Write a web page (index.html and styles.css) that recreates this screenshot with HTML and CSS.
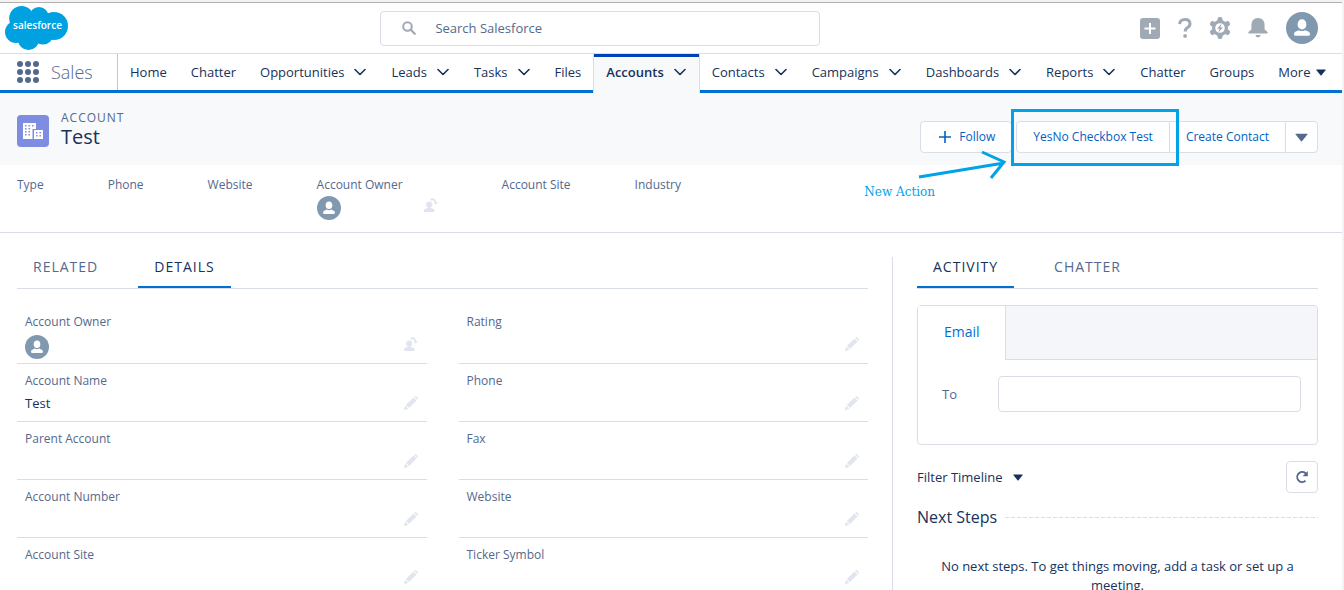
FILE: index.html
```html
<!DOCTYPE html>
<html lang="en">
<head>
    <meta charset="UTF-8">
    <meta name="viewport" content="width=device-width, initial-scale=1.0">
    <title>Test | Salesforce</title>
    <link rel="stylesheet" href="styles.css">
</head>
<body>
    <!-- shared icons -->
    <svg class="sprite" aria-hidden="true">
        <symbol id="chevron" viewBox="0 0 12 8"><path d="M1 1.5l5 5 5-5" fill="none" stroke="currentColor" stroke-width="1.6" stroke-linecap="round" stroke-linejoin="round"/></symbol>
        <symbol id="triangle" viewBox="0 0 12 8"><path d="M1 0.5h10q1 0 .4.8L6.6 7.3q-.6.7-1.2 0L.6 1.3Q0 .5 1 .5z" fill="currentColor"/></symbol>
        <symbol id="pencil" viewBox="0 0 14 14"><path d="M10.200.8l.4-.4q.8-.8 1.700 0l1.300 1.300q.8.9 0 1.700l-.4.4zM9.500 1.400l3.100 3.100-7.600 7.600L1.900 9zM1.300 9.700l3 3-3.300 1.200q-1.300.3-.9-.9z" fill="currentColor"/></symbol>
        <symbol id="change-owner" viewBox="0 0 14 14"><circle cx="5.200" cy="6.500" r="3.100" fill="currentColor"/><path d="M4 8.500h2.500v1.200l3.200 1.300q.8.400.8 1.300v.9q0 .8-.8.800H.8q-.8 0-.8-.8v-.9q0-.9.800-1.300L4 9.700z" fill="currentColor"/><path d="M7.300 1.300q3.700-.6 4.200 3.200" fill="none" stroke="currentColor" stroke-width="1.700"/><path d="M8.200 0v3L6 1.600zM9.300 4.200H14l-2.400 2.600z" fill="currentColor"/></symbol>
        <symbol id="user" viewBox="0 0 24 24"><circle cx="12" cy="12" r="12" fill="#8199af"/><ellipse cx="12" cy="9.300" rx="3.300" ry="3.800" fill="#fff"/><path d="M6 16.800q0-1.500 1.300-2.100l2.400-1.100q2.300 1.400 4.600 0l2.400 1.100q1.300.6 1.300 2.100 0 1.100-1 1.100H7q-1 0-1-1.100z" fill="#fff"/></symbol>
    </svg>

    <div class="app">
        <header class="global-header">
            <svg class="logo" viewBox="0 0 64 44" role="img" aria-label="salesforce">
                <g fill="#00a1e0">
                    <circle cx="16.500" cy="12.300" r="12.300"/><circle cx="34" cy="10.500" r="9.500"/><circle cx="49" cy="20" r="14"/>
                    <circle cx="11" cy="26" r="11"/><circle cx="23.500" cy="33.500" r="10.500"/><circle cx="38" cy="28" r="10.500"/>
                    <path d="M14 12h36v20H14z"/>
                </g>
                <text x="32.500" y="23" text-anchor="middle">salesforce</text>
            </svg>
            <div class="search">
                <svg width="14" height="14" viewBox="0 0 14 14"><circle cx="5.500" cy="5.500" r="4.300" fill="none" stroke="currentColor" stroke-width="2"/><path d="M8.800 8.800l3.900 3.900" stroke="currentColor" stroke-width="2.300" stroke-linecap="round"/></svg>
                <input type="search" aria-label="Search Salesforce" placeholder="Search Salesforce">
            </div>
            <div class="global-actions">
                <button aria-label="Global actions"><svg width="20" height="21" viewBox="0 0 20 21"><rect width="20" height="21" rx="3" fill="currentColor"/><path d="M10 5v11M4.500 10.500h11" stroke="#fff" stroke-width="2"/></svg></button>
                <button aria-label="Help"><svg width="14" height="20" viewBox="0 0 14 20"><path d="M1.600 6.200Q1.900 1.600 7 1.600q5 0 5 4.200 0 2.300-2.700 4Q7.200 11 7.200 13.600" fill="none" stroke="currentColor" stroke-width="3"/><rect x="5.400" y="16.300" width="3.400" height="3.400" rx="1" fill="currentColor"/></svg></button>
                <button aria-label="Setup"><svg width="20" height="22" viewBox="0 0 20 22"><g fill="currentColor"><circle cx="10" cy="11" r="8"/><rect x="7.500" y="0" width="5" height="22" rx="2"/><rect x="7.500" y="0" width="5" height="22" rx="2" transform="rotate(60 10 11)"/><rect x="7.500" y="0" width="5" height="22" rx="2" transform="rotate(120 10 11)"/></g><circle cx="10" cy="11" r="4.800" fill="#fff"/><path d="M11.500 6.800L7 11.800h2.600l-1.200 3.600 4.600-5h-2.600z" fill="currentColor"/></svg></button>
                <button aria-label="Notifications"><svg width="20" height="20" viewBox="0 0 20 20"><path d="M10 0q6.600.3 6.600 7v4.500l2.700 2.300q1.300 1.700-.8 1.700h-17q-2.100 0-.8-1.700l2.700-2.300V7Q3.400.3 10 0zM7.300 17h5.400q-.5 2.400-2.700 2.400T7.300 17z" fill="currentColor"/></svg></button>
                <button aria-label="View profile"><svg width="32" height="32"><use href="#user"/></svg></button>
            </div>
        </header>

        <nav class="app-nav">
            <button class="launcher" aria-label="App launcher"><i></i><i></i><i></i><i></i><i></i><i></i><i></i><i></i><i></i></button>
            <span class="app-name">Sales</span>
            <ul class="nav-items">
                <li><a href="#">Home</a></li>
                <li><a href="#">Chatter</a></li>
                <li><a href="#">Opportunities<svg class="chev"><use href="#chevron"/></svg></a></li>
                <li><a href="#">Leads<svg class="chev"><use href="#chevron"/></svg></a></li>
                <li><a href="#">Tasks<svg class="chev"><use href="#chevron"/></svg></a></li>
                <li><a href="#">Files</a></li>
                <li class="active"><a href="#">Accounts<svg class="chev"><use href="#chevron"/></svg></a></li>
                <li><a href="#">Contacts<svg class="chev"><use href="#chevron"/></svg></a></li>
                <li><a href="#">Campaigns<svg class="chev"><use href="#chevron"/></svg></a></li>
                <li><a href="#">Dashboards<svg class="chev"><use href="#chevron"/></svg></a></li>
                <li><a href="#">Reports<svg class="chev"><use href="#chevron"/></svg></a></li>
                <li><a href="#">Chatter</a></li>
                <li><a href="#">Groups</a></li>
                <li class="more"><a href="#">More<svg class="tri"><use href="#triangle"/></svg></a></li>
            </ul>
        </nav>

        <section class="record-header">
            <span class="record-icon">
                <svg width="20" height="17" viewBox="0 0 20 17"><path d="M0 0h13v6H9.500v10H0z" fill="#fff"/><path d="M11 7h9v9h-9z" fill="#fff"/><path d="M2.800 2v12M6.300 2v12M9.800 2v3M13.800 9v6M17.200 9v6" stroke="#7f8de1" stroke-width="1.500" stroke-dasharray="1.500 1.500"/></svg>
            </span>
            <div class="record-title">
                <p>ACCOUNT</p>
                <h1>Test</h1>
            </div>
            <div class="record-actions">
                <button class="btn follow"><svg width="12" height="12" viewBox="0 0 12 12"><path d="M6 0v12M0 6h12" stroke="currentColor" stroke-width="1.600"/></svg>Follow</button>
                <div class="btn-group">
                    <span class="callout-target">
                        <button class="btn">YesNo Checkbox Test</button>
                        <span class="callout-box"></span>
                        <svg class="callout-arrow" width="92" height="32" viewBox="0 0 92 32"><path d="M3 28L88 14M66 3l22 10-13 16" fill="none" stroke="#00a2e8" stroke-width="3"/></svg>
                        <span class="callout-text">New Action</span>
                    </span>
                    <button class="btn create">Create Contact</button>
                    <button class="btn menu" aria-label="More actions"><svg class="tri"><use href="#triangle"/></svg></button>
                </div>
            </div>
        </section>

        <section class="highlights">
            <div>Type</div>
            <div>Phone</div>
            <div>Website</div>
            <div class="owner">Account Owner
                <div class="owner-value"><svg width="24" height="24"><use href="#user"/></svg><button class="edit" aria-label="Change owner"><svg width="14" height="14"><use href="#change-owner"/></svg></button></div>
            </div>
            <div>Account Site</div>
            <div>Industry</div>
        </section>

        <main class="content">
            <section class="details">
                <div class="tabs" role="tablist">
                    <button role="tab">RELATED</button>
                    <button role="tab" class="selected">DETAILS</button>
                </div>
                <div class="fields">
                    <div class="field">
                        <span class="label">Account Owner</span>
                        <div class="value"><svg class="avatar" width="24" height="24"><use href="#user"/></svg><button class="edit" aria-label="Change owner"><svg width="14" height="14"><use href="#change-owner"/></svg></button></div>
                    </div>
                    <div class="field">
                        <span class="label">Rating</span>
                        <div class="value"><button class="edit" aria-label="Edit Rating"><svg width="14" height="14"><use href="#pencil"/></svg></button></div>
                    </div>
                    <div class="field">
                        <span class="label">Account Name</span>
                        <div class="value">Test<button class="edit" aria-label="Edit Account Name"><svg width="14" height="14"><use href="#pencil"/></svg></button></div>
                    </div>
                    <div class="field">
                        <span class="label">Phone</span>
                        <div class="value"><button class="edit" aria-label="Edit Phone"><svg width="14" height="14"><use href="#pencil"/></svg></button></div>
                    </div>
                    <div class="field">
                        <span class="label">Parent Account</span>
                        <div class="value"><button class="edit" aria-label="Edit Parent Account"><svg width="14" height="14"><use href="#pencil"/></svg></button></div>
                    </div>
                    <div class="field">
                        <span class="label">Fax</span>
                        <div class="value"><button class="edit" aria-label="Edit Fax"><svg width="14" height="14"><use href="#pencil"/></svg></button></div>
                    </div>
                    <div class="field">
                        <span class="label">Account Number</span>
                        <div class="value"><button class="edit" aria-label="Edit Account Number"><svg width="14" height="14"><use href="#pencil"/></svg></button></div>
                    </div>
                    <div class="field">
                        <span class="label">Website</span>
                        <div class="value"><button class="edit" aria-label="Edit Website"><svg width="14" height="14"><use href="#pencil"/></svg></button></div>
                    </div>
                    <div class="field">
                        <span class="label">Account Site</span>
                        <div class="value"><button class="edit" aria-label="Edit Account Site"><svg width="14" height="14"><use href="#pencil"/></svg></button></div>
                    </div>
                    <div class="field">
                        <span class="label">Ticker Symbol</span>
                        <div class="value"><button class="edit" aria-label="Edit Ticker Symbol"><svg width="14" height="14"><use href="#pencil"/></svg></button></div>
                    </div>
                </div>
            </section>

            <aside class="activity">
                <div class="tabs" role="tablist">
                    <button role="tab" class="selected">ACTIVITY</button>
                    <button role="tab">CHATTER</button>
                </div>
                <div class="composer">
                    <div class="composer-tabs"><button>Email</button></div>
                    <div class="composer-body">
                        <label for="to">To</label>
                        <input id="to" type="text">
                    </div>
                </div>
                <div class="timeline-bar">
                    <button class="filter">Filter Timeline<svg class="tri"><use href="#triangle"/></svg></button>
                    <button class="refresh" aria-label="Refresh"><svg width="14" height="14" viewBox="0 0 14 14"><path d="M11 3.700A5 5 0 1 0 10.500 10.800" fill="none" stroke="currentColor" stroke-width="1.900"/><path d="M12.800 1v5.200H7.600z" fill="currentColor"/></svg></button>
                </div>
                <h2 class="next-steps">Next Steps</h2>
                <p class="empty">No next steps. To get things moving, add a task or set up a meeting.</p>
            </aside>
        </main>
    </div>
</body>
</html>
```
FILE: styles.css
```css
* { box-sizing: border-box; }
body { margin: 0; background: #f3f3f3; color: #16325c; font: 13px/18px "Open Sans", "Noto Sans", sans-serif; }
button, input { font: inherit; color: inherit; }
button { padding: 0; border: 0; background: none; cursor: pointer; }
a { color: inherit; text-decoration: none; }
h1, h2, p, ul { margin: 0; padding: 0; font-weight: 400; }
svg { display: block; flex: none; }
.sprite { position: absolute; width: 0; height: 0; }
.chev { width: 12px; height: 8px; }
.tri { width: 10px; height: 7px; }

.app { height: 100vh; padding-right: 2px; border-top: 2px solid #f3f3f3; display: flex; flex-direction: column; overflow: hidden; }

/* top bar */
.global-header { display: grid; grid-template-columns: 43fr 440px 57fr; align-items: center; height: 52px; padding: 0 24px 0 5px; background: #fff; border-top: 1px solid #b0b0b0; border-bottom: 1px solid #d8dde6; }
.logo { width: 64px; height: 44px; }
.logo text { fill: #fff; font-size: 10px; font-weight: 600; }
.search { display: flex; align-items: center; height: 35px; padding-left: 21px; gap: 19px; border: 1px solid #d8dde6; border-radius: 4px; color: #9faab5; }
.search input { flex: 1; border: 0; outline: 0; padding: 0; background: none; }
.search input::placeholder { color: #54698d; opacity: 1; }
.global-actions { display: flex; justify-content: flex-end; align-items: center; gap: 18px; color: #9faab5; }

/* app navigation */
.app-nav { display: flex; height: 39px; background: #fff; border-bottom: 3px solid #0070d2; }
.launcher { display: grid; grid-template-columns: repeat(3, 6px); gap: 2px; align-content: center; margin: 0 12px 0 17px; }
.launcher i { width: 6px; height: 6px; border-radius: 50%; background: #54698d; }
.app-name { width: 67px; border-right: 1px solid #c4c9d1; font-size: 18px; line-height: 37px; color: #54698d; font-weight: 300; flex: none; }
.nav-items { display: flex; flex: 1; list-style: none; }
.nav-items li { height: 36px; padding: 0 12px; }
.nav-items a { display: flex; align-items: center; height: 36px; gap: 10px; }
.nav-items .chev { margin-right: 1px; }
.nav-items .active { height: 39px; background: #f7f9fb; border: 1px solid #d8dde6; border-width: 0 1px; box-shadow: inset 0 3px #0041b8; font-weight: 600; }
.nav-items .more a { gap: 6px; }

/* record header */
.record-header { display: flex; align-items: center; height: 72px; padding: 0 24px 0 17px; background: #f7f9fb; }
.record-icon { display: grid; place-items: center; width: 32px; height: 32px; margin-top: 4px; border-radius: 4px; background: #7f8de1; }
.record-title { margin-left: 12px; }
.record-title p { color: #54698d; font-size: 12px; letter-spacing: 1px; line-height: 16px; }
.record-title h1 { font-size: 20px; line-height: 22px; }
.record-actions { display: flex; gap: 4px; margin: 16px 0 0 auto; }
.btn { display: flex; align-items: center; justify-content: center; height: 32px; padding: 0 16px; background: #fff; border: 1px solid #d8dde6; border-radius: 4px; color: #0062c4; font-size: 12px; }
.follow { gap: 8px; padding-left: 18px; }
.btn-group { display: flex; }
.callout-target { position: relative; }
.callout-target .btn { border-radius: 4px 0 0 4px; }
.create { margin-left: -1px; border-radius: 0; }
.menu { width: 33px; margin-left: -1px; padding: 0; border-radius: 0 4px 4px 0; color: #54698d; }
.menu .tri { width: 13px; height: 9px; }
.callout-box { position: absolute; inset: -12px -9px -13px -5px; border: 3px solid #00a2e8; pointer-events: none; }
.callout-arrow { position: absolute; top: 28px; left: -100px; }
.callout-text { position: absolute; top: 62px; left: -152px; white-space: nowrap; color: #00a2e8; font: 12px/18px "DejaVu Serif", serif; }

.highlights { display: flex; gap: 64px; height: 68px; padding: 11px 17px 0; background: #fff; border-bottom: 1px solid #d8dde6; color: #54698d; font-size: 12px; flex: none; }
.owner { width: 121px; }
.owner-value { display: flex; justify-content: space-between; margin-top: 2px; }
.owner-value .edit { margin-top: 2px; }
.edit { height: 14px; margin-left: auto; color: #e0e5ee; }

/* body columns */
.content { display: grid; grid-template-columns: minmax(0, 1fr) 450px; flex: 1; min-height: 0; padding-top: 24px; background: #fff; }
.details { padding: 0 24px 0 17px; }
.tabs { display: flex; gap: 24px; height: 32px; border-bottom: 1px solid #d8dde6; }
.tabs button { height: 31px; padding: 0 16px 10px; border-bottom: 2px solid transparent; font-size: 14px; line-height: 19px; letter-spacing: 1px; color: #54698d; }
.tabs .selected { border-color: #0070d2; color: #16325c; }
.fields { display: grid; grid-template-columns: 1fr 1fr; column-gap: 32px; margin-top: 16px; }
.field { padding: 8px 9px 4px 8px; border-bottom: 1px solid #d8dde6; }
.label { display: block; color: #54698d; font-size: 12px; }
.value { display: flex; min-height: 27px; line-height: 27px; }
.value .avatar { margin-top: 4px; }
.value .edit { margin-top: 6px; }

.activity { padding: 0 24px; border-left: 1px solid #d8dde6; }
.composer { height: 140px; margin-top: 16px; border: 1px solid #d8dde6; border-radius: 4px; }
.composer-tabs { background: linear-gradient(#d8dde6, #d8dde6) bottom / 100% 1px no-repeat #f4f6fa; border-radius: 0 4px 0 0; }
.composer-tabs button { height: 54px; padding: 0 25px 2px 26px; display: block; background: #fff; border-right: 1px solid #d8dde6; color: #0070d2; font-size: 14px; border-radius: 4px 0 0 0; }
.composer-body { display: flex; align-items: center; padding: 16px 16px 0 24px; color: #54698d; }
.composer-body label { width: 56px; }
.composer-body input { flex: 1; min-width: 0; height: 36px; border: 1px solid #d8dde6; border-radius: 4px; background: #fff; }
.timeline-bar { display: flex; justify-content: space-between; align-items: center; margin-top: 16px; }
.filter { display: flex; align-items: center; gap: 10px; }
.refresh { display: grid; place-items: center; width: 32px; height: 32px; border: 1px solid #d8dde6; border-radius: 4px; color: #54698d; }
.next-steps { display: flex; align-items: center; gap: 8px; margin-top: 12px; font-size: 16px; line-height: 24px; }
.next-steps::after { content: ""; flex: 1; height: 1px; background: repeating-linear-gradient(90deg, #d8dde6 0 4px, transparent 4px 6px); }
.empty { margin-top: 28px; padding: 0 24px; text-align: center; line-height: 19px; }
```
